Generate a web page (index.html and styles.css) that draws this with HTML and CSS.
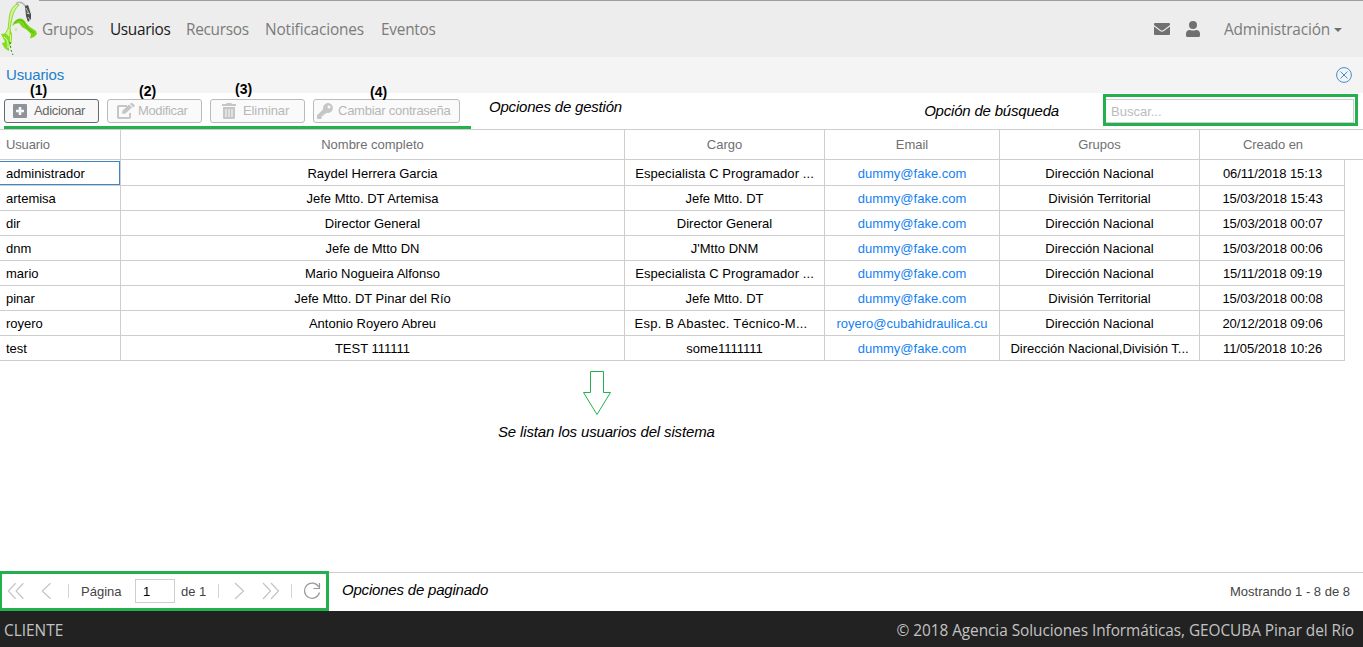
FILE: index.html
```html
<!DOCTYPE html>
<html lang="es">
<head>
<meta charset="utf-8">
<title>Usuarios</title>
<link rel="stylesheet" href="styles.css">
</head>
<body>
<div class="app">
  <header class="navbar">
    <svg class="logo" width="42" height="57" viewBox="0 0 42 57">
      <path d="M17 4Q11 7 9.500 16L8 29L5 34L6 42L9 44L11 35L10 28L12 18Q14 9 19 5Z" fill="#d3f59b" stroke="#8ada2a" stroke-width="1"/>
      <path d="M16 3.500Q22 0 26 7" fill="none" stroke="#b9bdba" stroke-width="1.800"/>
      <path d="M25 6L28 5L31 14L31 19L28 22L26 16Z" fill="#4a4f4c"/>
      <path d="M26 8l3 6M26.500 13l3 1M28 17l2 3M30 10l1 3" stroke="#e0e0e0" stroke-width=".8"/>
      <path d="M12 26Q15 18 21 18.500Q25 20 26 23L30 27L36 31L37 34L34 37L30 38.500L31 34L27 30L22 27L19 23L15 24Z" fill="#7ad614"/>
      <path d="M14 23Q18 18 23 21L28 29L34 33" fill="none" stroke="#4fae0d" stroke-width=".8"/>
      <path d="M1 34Q7 32 9 37L10 29L12 34L12 42L9 47L9 51Q3 48 2 43L5 42Z" fill="#86dc20"/>
      <path d="M4 37Q9 40 8 48M10 34L11 42" fill="none" stroke="#e4ffc0"/>
      <path d="M10 42L11 50L13 55" fill="none" stroke="#228e27" stroke-dasharray="2 2"/>
      <path d="M16 28v3" stroke="#a5e94a"/>
    </svg>
    <nav class="menu">
      <a class="m-grupos">Grupos</a><a class="m-usuarios active">Usuarios</a><a class="m-recursos">Recursos</a><a class="m-notif">Notificaciones</a><a class="m-eventos">Eventos</a>
    </nav>
    <div class="account">
      <svg class="mail" width="16" height="12" viewBox="0 0 16 12"><path fill="#707070" d="M1 0h14q1 0 1 1v1L9.500 7Q8 8 6.500 7L0 2V1Q0 0 1 0M0 3.400L6 8q2 1.300 4 0l6-4.600V11q0 1-1 1H1q-1 0-1-1Z"/></svg>
      <svg class="person" width="14" height="16" viewBox="0 0 14 16"><circle cx="7" cy="4" r="4" fill="#707070"/><path fill="#707070" d="M4 9q3 1.200 6 0 4 0 4 4v1.500q0 1.500-1.500 1.500h-11Q0 16 0 14.500V13q0-4 4-4"/></svg>
      <span class="admin">Administración</span><i class="caret"></i>
    </div>
  </header>
  <section class="titlebar">
    <h1>Usuarios</h1>
    <svg width="16" height="16" viewBox="0 0 16 16" fill="none" stroke="#3f8fd0"><circle cx="8" cy="8" r="7.400"/><path d="M4.500 4.500l7 7m0-7l-7 7"/></svg>
  </section>
  <section class="toolbar">
    <div class="buttons">
      <button class="btn enabled"><span class="tag t1">(1)</span><svg width="14" height="14" viewBox="0 0 14 14"><path fill="#8e9399" fill-rule="evenodd" d="M1 0h12q1 0 1 1v12q0 1-1 1H1q-1 0-1-1V1q0-1 1-1m4.700 3v2.700H3v2.600h2.700V11h2.600V8.300H11V5.700H8.300V3Z"/></svg><span class="b1">Adicionar</span></button>
      <button class="btn"><span class="tag t2">(2)</span><svg width="18" height="16" viewBox="0 0 18 16"><path fill="none" stroke="#c6c6c6" stroke-width="2" d="M10 3H2q-1 0-1 1v10q0 1 1 1h10q1 0 1-1v-4"/><path fill="#c6c6c6" d="M5 11l.5-3.500L12 1.500 15 4.500 8.500 10.500ZM13 1l1-1q.6-.4 1.200 0L17.500 2q.5.600 0 1.200l-1.300 1.200Z"/></svg><span class="b2">Modificar</span></button>
      <button class="btn"><span class="tag t3">(3)</span><svg width="14" height="16" viewBox="0 0 14 16"><path fill="#c6c6c6" fill-rule="evenodd" d="M0 1h4l1-1h4l1 1h4v2H0M1 4h12v10.500q0 1.500-1.500 1.500h-9Q1 16 1 14.500M3.500 6v8h1V6m2 0v8h1V6m2 0v8h1V6Z"/></svg><span class="b3">Eliminar</span></button>
      <button class="btn"><span class="tag t4">(4)</span><svg width="16" height="16" viewBox="0 0 16 16"><path fill="#c6c6c6" fill-rule="evenodd" d="M11 0a5 5 0 1 1-1.500 9.800L8 11.200H6.500V13H4.700v2.200L4 16H1q-1 0-1-1v-2.700L6.200 6.200A5 5 0 0 1 11 0m1 2.500a1.500 1.500 0 1 0 .01 0Z"/></svg><span class="b4">Cambiar contraseña</span></button>
    </div>
    <div class="note n-gestion">Opciones de gestión</div>
    <div class="note n-busqueda">Opción de búsqueda</div>
    <div class="search"><input placeholder="Buscar..."></div>
  </section>
  <main class="grid">
    <div class="row head"><span>Usuario</span><span>Nombre completo</span><span>Cargo</span><span>Email</span><span>Grupos</span><span>Creado en</span></div>
    <div class="row first"><span class="selected">administrador</span><span>Raydel Herrera Garcia</span><span class="wide">Especialista C Programador ...</span><span><a>dummy@fake.com</a></span><span>Dirección Nacional</span><span>06/11/2018 15:13</span></div>
    <div class="row"><span>artemisa</span><span>Jefe Mtto. DT Artemisa</span><span>Jefe Mtto. DT</span><span><a>dummy@fake.com</a></span><span>División Territorial</span><span>15/03/2018 15:43</span></div>
    <div class="row"><span>dir</span><span>Director General</span><span>Director General</span><span><a>dummy@fake.com</a></span><span>Dirección Nacional</span><span>15/03/2018 00:07</span></div>
    <div class="row"><span>dnm</span><span>Jefe de Mtto DN</span><span>J'Mtto DNM</span><span><a>dummy@fake.com</a></span><span>Dirección Nacional</span><span>15/03/2018 00:06</span></div>
    <div class="row"><span>mario</span><span>Mario Nogueira Alfonso</span><span class="wide">Especialista C Programador ...</span><span><a>dummy@fake.com</a></span><span>Dirección Nacional</span><span>15/11/2018 09:19</span></div>
    <div class="row"><span>pinar</span><span>Jefe Mtto. DT Pinar del Río</span><span>Jefe Mtto. DT</span><span><a>dummy@fake.com</a></span><span>División Territorial</span><span>15/03/2018 00:08</span></div>
    <div class="row"><span>royero</span><span>Antonio Royero Abreu</span><span class="wider">Esp. B Abastec. Técnico-M...</span><span><a>royero@cubahidraulica.cu</a></span><span>Dirección Nacional</span><span>20/12/2018 09:06</span></div>
    <div class="row"><span>test</span><span>TEST 111111</span><span>some1111111</span><span><a>dummy@fake.com</a></span><span>Dirección Nacional,División T...</span><span>11/05/2018 10:26</span></div>
    <div class="callout">
      <svg width="28" height="45" viewBox="0 0 28 45"><path fill="none" stroke="#22b14c" d="M7.500 .5h13v21h7L14 43.500.5 21.500h7Z"/></svg>
      <div class="note n-lista">Se listan los usuarios del sistema</div>
    </div>
  </main>
  <section class="pager">
    <div class="controls">
      <svg width="68" height="18" viewBox="0 0 68 18" fill="none" stroke="#c4c4c4" stroke-width="1.200"><path d="M14 1L6.500 9l7.500 8M22 1L14.500 9l7.500 8M50 1L41.500 9l8.500 8"/></svg>
      <i class="sep"></i><span class="pagina">Página</span><input class="page" value="1"><span class="de">de 1</span><i class="sep"></i>
      <svg width="72" height="18" viewBox="0 0 72 18" fill="none" stroke="#c4c4c4" stroke-width="1.200"><path d="M16 1l8.500 8-8.500 8M44 1l7.500 8-7.500 8M52 1l7.500 8-7.500 8"/></svg>
      <i class="sep"></i>
      <svg class="reload" width="18" height="18" viewBox="0 0 18 18" fill="none" stroke="#999" stroke-width="1.200"><path d="M15.800 5A7.600 7.600 0 1 0 16.500 10.500M16.500 1v5.500h-6"/></svg>
    </div>
    <div class="note n-paginado">Opciones de paginado</div>
    <div class="showing">Mostrando 1 - 8 de 8</div>
  </section>
  <footer><span class="cliente">CLIENTE</span><span class="copy">© 2018 Agencia Soluciones Informáticas, GEOCUBA Pinar del Río</span></footer>
</div>
</body>
</html>
```
FILE: styles.css
```css
*, *::after { box-sizing: border-box; }
body { margin: 0; background: #fff; font: 13px "Liberation Sans", Arial, sans-serif; overflow: hidden; }
.app { display: flex; flex-direction: column; width: 1363px; height: 647px; }
svg { display: block; flex: none; }
.navbar { height: 57px; flex: none; display: flex; background: linear-gradient(90deg, transparent 39px, #a39c9b 39px) top / 100% 1px no-repeat #ededed; font: 15.400px/22px "Open Sans", "Noto Sans", sans-serif; color: #7b7b7b; }
.menu { display: flex; gap: 16px; padding-top: 19px; letter-spacing: -.15px; }
.menu a { white-space: nowrap; }
.menu .active { color: #191919; }
.m-grupos { width: 52px; }
.m-usuarios { width: 60px; letter-spacing: -.35px; }
.m-recursos { width: 63px; letter-spacing: -.3px; }
.m-notif { width: 100px; }
.m-eventos { letter-spacing: -.25px; }
.m-grupos { letter-spacing: -.25px; }
.account { display: flex; margin-left: auto; padding: 19px 21px 0 0; }
.mail { margin: 4px 16px 0 0; }
.person { margin: 2px 24px 0 0; }
.admin { width: 106px; white-space: nowrap; letter-spacing: -.15px; }
.caret { width: 8px; height: 4px; margin: 9px 0 0 4px; border: 4px solid transparent; border-top-color: #707070; border-bottom: 0; }
.titlebar { height: 36px; flex: none; display: flex; justify-content: space-between; align-items: center; padding: 0 11px 0 6px; background: #f4f4f4; }
h1 { margin: -2px 0 0; font-size: 15px; font-weight: 400; color: #1c7fcd; letter-spacing: -.15px; }
.toolbar { height: 36px; flex: none; display: flex; }
.buttons { display: flex; gap: 8px; width: 467px; margin-left: 4px; padding-top: 6px; border-bottom: 3px solid #22b14c; }
.btn { position: relative; display: flex; align-items: center; width: 95px; height: 24px; padding: 0 0 0 9px; border: 1px solid #bbb; border-radius: 3px; background: #fafafa; color: #b7b7b7; font: 13px "Liberation Sans", Arial, sans-serif; letter-spacing: -.25px; white-space: nowrap; }
.btn.enabled { border-color: #656a74; background: #f8f8f8; color: #666; padding-left: 8px; }
.btn:nth-child(3) { padding-left: 11px; }
.btn:last-child { width: 147px; padding-left: 3px; }
.b1 { margin-left: 7px; letter-spacing: -.35px; }
.b2 { margin-left: 3px; letter-spacing: -.35px; }
.b3 { margin-left: 7px; letter-spacing: -.1px; }
.b4 { margin-left: 5px; }
.btn > span:last-child { padding-bottom: 1px; }
.tag { position: absolute; top: -18px; color: #000; font-weight: 700; font-size: 14px; line-height: 16px; letter-spacing: 0; }
.t1 { left: 25px; }
.t2 { left: 31px; top: -17px; }
.t3 { left: 24px; top: -19px; }
.t4 { left: 56px; top: -16px; }
.note { font-size: 15px; line-height: 18px; font-style: italic; letter-spacing: -.2px; white-space: nowrap; color: #000; }
.n-gestion { margin: 5px 0 0 18px; }
.n-busqueda { margin: 9px 44px 0 auto; }
.search { width: 255px; height: 32px; margin: 1px 5px 0 0; padding: 2px 1px 0 0; border: 3px solid #22b14c; }
.search input { display: block; width: 248px; height: 24px; padding: 0 5px; border: 1px solid #cecece; border-left: 0; outline: 0; font: 13px "Liberation Sans", Arial, sans-serif; }
.search input::placeholder { color: #bbb; opacity: 1; }
.grid { flex: 1; min-height: 0; }
.row { display: grid; grid-template-columns: 121px 504px 200px 175px 200px 145px; width: 1345px; height: 25px; line-height: 26px; text-align: center; color: #000; }
.row span { border: solid #cecece; border-width: 0 1px 1px 0; white-space: nowrap; overflow: hidden; }
.row span:first-child { text-align: left; padding-left: 6px; }
.row span:last-child { letter-spacing: -.07px; padding-left: 1px; }
.row .wide { letter-spacing: .08px; }
.row .wider { letter-spacing: .22px; padding-right: 7px; }
.row a { color: #147ff2; }
.row.first { height: 26px; line-height: 28px; }
.row .selected { position: relative; }
.selected::after { content: ""; position: absolute; left: -1px; top: 1px; width: 121px; height: 24px; border: 1px solid #3d85c6; }
.row.head { width: 1363px; height: 31px; line-height: 29px; border: solid #cecece; border-width: 1px 0; color: #707070; }
.row.head span { border-bottom: 0; }
.row.head span:first-child { letter-spacing: -.15px; }
.row.head span:last-child { border-right: 0; width: 145px; }
.callout { width: 218px; margin: 10px 0 0 498px; display: flex; flex-direction: column; }
.callout svg { margin-left: 85px; }
.n-lista { margin-top: 7px; letter-spacing: -.15px; }
.pager { height: 39px; flex: none; display: flex; border-top: 1px solid #cecece; color: #444; }
.controls { width: 329px; height: 40px; margin-top: -2px; border: 3px solid #22b14c; border-left-width: 2px; display: flex; align-items: center; }
.sep { width: 1px; height: 14px; background: #d5d5d5; }
.controls svg:first-child { width: 66px; }
.pagina { box-sizing: content-box; width: 42px; padding-left: 12px; }
.page { width: 40px; height: 24px; margin-left: 12px; padding: 0 7px; border: 1px solid #cecece; font: 13px "Liberation Sans", Arial, sans-serif; }
.de { width: 37px; margin-left: 6px; }
.reload { margin-left: 11px; }
.n-paginado { margin: 8px 0 0 13px; }
.showing { margin: 11px 13px 0 auto; }
footer { height: 36px; flex: none; display: flex; justify-content: space-between; padding: 0 9px 0 4px; background: #222; color: #c2c2c2; font: 15.400px/39px "Open Sans", "Noto Sans", sans-serif; white-space: nowrap; }
.copy { letter-spacing: -.06px; }
```
